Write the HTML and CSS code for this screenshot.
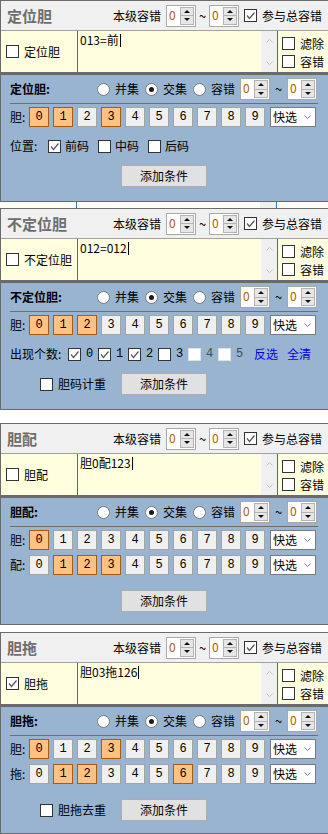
FILE: index.html
```html
<!DOCTYPE html>
<html lang="zh-CN">
<head>
    <meta charset="UTF-8">
    <meta name="viewport" content="width=device-width, initial-scale=1.0">
    <title>条件设置</title>
    <link rel="stylesheet" href="styles.css">
</head>
<body>
    <!-- 定位胆 -->
    <div class="panel">
        <div class="head">
            <span class="title">定位胆</span>
            <span>本级容错</span>
            <span class="spin from"><span class="val">0</span><span class="arr"><i class="up"></i><i class="dn"></i></span></span>
            <span class="tilde">~</span>
            <span class="spin"><span class="val">0</span><span class="arr"><i class="up"></i><i class="dn"></i></span></span>
            <span class="cb on join"><svg viewBox="0 0 11 11"><path d="M2 5.5 4.5 8.5 9.5 2.5"/></svg></span><span>参与总容错</span>
        </div>
        <div class="entry">
            <label class="pick"><span class="cb"></span>定位胆</label>
            <div class="memo">
                <div class="memo-text">013=前<i class="caret"></i></div>
                <div class="vscroll">
                    <svg viewBox="0 0 7 4"><path d="M0.5 3.5 3.5 0.5 6.5 3.5"/></svg>
                    <svg viewBox="0 0 7 4"><path d="M0.5 0.5 3.5 3.5 6.5 0.5"/></svg>
                </div>
            </div>
            <div class="flags">
                <label><span class="cb"></span>滤除</label>
                <label><span class="cb"></span>容错</label>
            </div>
        </div>
        <div class="cond">
            <div class="cond-head">
                <b class="cond-title">定位胆:</b>
                <span class="rd"></span><span class="rd-text">并集</span>
                <span class="rd on"></span><span class="rd-text">交集</span>
                <span class="rd"></span><span class="rd-text last">容错</span>
                <span class="spin"><span class="val">0</span><span class="arr"><i class="up"></i><i class="dn"></i></span></span>
                <span class="tilde wide">~</span>
                <span class="spin"><span class="val">0</span><span class="arr"><i class="up"></i><i class="dn"></i></span></span>
            </div>
            <div class="sep"></div>
            <div class="nums">
                <span class="lbl">胆:</span>
                <span class="num on">0</span><span class="num on">1</span><span class="num">2</span><span class="num on">3</span><span class="num">4</span>
                <span class="num">5</span><span class="num">6</span><span class="num">7</span><span class="num">8</span><span class="num">9</span>
                <span class="quick">快选<svg viewBox="0 0 7 4"><path d="M0.5 0.5 3.5 3.5 6.5 0.5"/></svg></span>
            </div>
            <div class="opts">
                <span class="opt-lbl">位置:</span>
                <label class="opt"><span class="cb on"><svg viewBox="0 0 11 11"><path d="M2 5.5 4.5 8.5 9.5 2.5"/></svg></span>前码</label>
                <label class="opt"><span class="cb"></span>中码</label>
                <label class="opt"><span class="cb"></span>后码</label>
            </div>
            <div class="actions">
                <span class="lead"></span>
                <span class="add">添加条件</span>
            </div>
        </div>
    </div>

    <div class="gap gap-a">
        <span class="g-left"></span><span class="g-line"></span><span class="g-mid"></span><span class="g-bar"></span><span class="g-line"></span>
    </div>

    <!-- 不定位胆 -->
    <div class="panel">
        <div class="head">
            <span class="title">不定位胆</span>
            <span>本级容错</span>
            <span class="spin from"><span class="val">0</span><span class="arr"><i class="up"></i><i class="dn"></i></span></span>
            <span class="tilde">~</span>
            <span class="spin"><span class="val">0</span><span class="arr"><i class="up"></i><i class="dn"></i></span></span>
            <span class="cb on join"><svg viewBox="0 0 11 11"><path d="M2 5.5 4.5 8.5 9.5 2.5"/></svg></span><span>参与总容错</span>
        </div>
        <div class="entry">
            <label class="pick"><span class="cb"></span>不定位胆</label>
            <div class="memo">
                <div class="memo-text">012=012<i class="caret"></i></div>
                <div class="vscroll">
                    <svg viewBox="0 0 7 4"><path d="M0.5 3.5 3.5 0.5 6.5 3.5"/></svg>
                    <svg viewBox="0 0 7 4"><path d="M0.5 0.5 3.5 3.5 6.5 0.5"/></svg>
                </div>
            </div>
            <div class="flags">
                <label><span class="cb"></span>滤除</label>
                <label><span class="cb"></span>容错</label>
            </div>
        </div>
        <div class="cond">
            <div class="cond-head">
                <b class="cond-title">不定位胆:</b>
                <span class="rd"></span><span class="rd-text">并集</span>
                <span class="rd on"></span><span class="rd-text">交集</span>
                <span class="rd"></span><span class="rd-text last">容错</span>
                <span class="spin"><span class="val">0</span><span class="arr"><i class="up"></i><i class="dn"></i></span></span>
                <span class="tilde wide">~</span>
                <span class="spin"><span class="val">0</span><span class="arr"><i class="up"></i><i class="dn"></i></span></span>
            </div>
            <div class="sep"></div>
            <div class="nums">
                <span class="lbl">胆:</span>
                <span class="num on">0</span><span class="num on">1</span><span class="num on">2</span><span class="num">3</span><span class="num">4</span>
                <span class="num">5</span><span class="num">6</span><span class="num">7</span><span class="num">8</span><span class="num">9</span>
                <span class="quick">快选<svg viewBox="0 0 7 4"><path d="M0.5 0.5 3.5 3.5 6.5 0.5"/></svg></span>
            </div>
            <div class="opts">
                <span class="opt-lbl count">出现个数:</span>
                <label class="cnt"><span class="cb on"><svg viewBox="0 0 11 11"><path d="M2 5.5 4.5 8.5 9.5 2.5"/></svg></span>0</label>
                <label class="cnt"><span class="cb on"><svg viewBox="0 0 11 11"><path d="M2 5.5 4.5 8.5 9.5 2.5"/></svg></span>1</label>
                <label class="cnt"><span class="cb on"><svg viewBox="0 0 11 11"><path d="M2 5.5 4.5 8.5 9.5 2.5"/></svg></span>2</label>
                <label class="cnt"><span class="cb"></span>3</label>
                <label class="cnt off"><span class="cb"></span>4</label>
                <label class="cnt off"><span class="cb"></span>5</label>
                <a class="link first">反选</a>
                <a class="link">全清</a>
            </div>
            <div class="actions">
                <span class="lead"><label><span class="cb"></span>胆码计重</label></span>
                <span class="add">添加条件</span>
            </div>
        </div>
    </div>

    <div class="gap gap-b"></div>

    <!-- 胆配 -->
    <div class="panel">
        <div class="head">
            <span class="title">胆配</span>
            <span>本级容错</span>
            <span class="spin from"><span class="val">0</span><span class="arr"><i class="up"></i><i class="dn"></i></span></span>
            <span class="tilde">~</span>
            <span class="spin"><span class="val">0</span><span class="arr"><i class="up"></i><i class="dn"></i></span></span>
            <span class="cb on join"><svg viewBox="0 0 11 11"><path d="M2 5.5 4.5 8.5 9.5 2.5"/></svg></span><span>参与总容错</span>
        </div>
        <div class="entry">
            <label class="pick"><span class="cb"></span>胆配</label>
            <div class="memo">
                <div class="memo-text">胆0配123<i class="caret"></i></div>
                <div class="vscroll">
                    <svg viewBox="0 0 7 4"><path d="M0.5 3.5 3.5 0.5 6.5 3.5"/></svg>
                    <svg viewBox="0 0 7 4"><path d="M0.5 0.5 3.5 3.5 6.5 0.5"/></svg>
                </div>
            </div>
            <div class="flags">
                <label><span class="cb"></span>滤除</label>
                <label><span class="cb"></span>容错</label>
            </div>
        </div>
        <div class="cond">
            <div class="cond-head">
                <b class="cond-title">胆配:</b>
                <span class="rd"></span><span class="rd-text">并集</span>
                <span class="rd on"></span><span class="rd-text">交集</span>
                <span class="rd"></span><span class="rd-text last">容错</span>
                <span class="spin"><span class="val">0</span><span class="arr"><i class="up"></i><i class="dn"></i></span></span>
                <span class="tilde wide">~</span>
                <span class="spin"><span class="val">0</span><span class="arr"><i class="up"></i><i class="dn"></i></span></span>
            </div>
            <div class="sep"></div>
            <div class="nums">
                <span class="lbl">胆:</span>
                <span class="num on">0</span><span class="num">1</span><span class="num">2</span><span class="num">3</span><span class="num">4</span>
                <span class="num">5</span><span class="num">6</span><span class="num">7</span><span class="num">8</span><span class="num">9</span>
                <span class="quick">快选<svg viewBox="0 0 7 4"><path d="M0.5 0.5 3.5 3.5 6.5 0.5"/></svg></span>
            </div>
            <div class="nums">
                <span class="lbl">配:</span>
                <span class="num">0</span><span class="num on">1</span><span class="num on">2</span><span class="num on">3</span><span class="num">4</span>
                <span class="num">5</span><span class="num">6</span><span class="num">7</span><span class="num">8</span><span class="num">9</span>
                <span class="quick">快选<svg viewBox="0 0 7 4"><path d="M0.5 0.5 3.5 3.5 6.5 0.5"/></svg></span>
            </div>
            <div class="actions">
                <span class="lead"></span>
                <span class="add">添加条件</span>
            </div>
        </div>
    </div>

    <div class="gap gap-c"></div>

    <!-- 胆拖 -->
    <div class="panel">
        <div class="head">
            <span class="title">胆拖</span>
            <span>本级容错</span>
            <span class="spin from"><span class="val">0</span><span class="arr"><i class="up"></i><i class="dn"></i></span></span>
            <span class="tilde">~</span>
            <span class="spin"><span class="val">0</span><span class="arr"><i class="up"></i><i class="dn"></i></span></span>
            <span class="cb on join"><svg viewBox="0 0 11 11"><path d="M2 5.5 4.5 8.5 9.5 2.5"/></svg></span><span>参与总容错</span>
        </div>
        <div class="entry">
            <label class="pick"><span class="cb on"><svg viewBox="0 0 11 11"><path d="M2 5.5 4.5 8.5 9.5 2.5"/></svg></span>胆拖</label>
            <div class="memo">
                <div class="memo-text">胆03拖126<i class="caret"></i></div>
                <div class="vscroll">
                    <svg viewBox="0 0 7 4"><path d="M0.5 3.5 3.5 0.5 6.5 3.5"/></svg>
                    <svg viewBox="0 0 7 4"><path d="M0.5 0.5 3.5 3.5 6.5 0.5"/></svg>
                </div>
            </div>
            <div class="flags">
                <label><span class="cb"></span>滤除</label>
                <label><span class="cb"></span>容错</label>
            </div>
        </div>
        <div class="cond">
            <div class="cond-head">
                <b class="cond-title">胆拖:</b>
                <span class="rd"></span><span class="rd-text">并集</span>
                <span class="rd on"></span><span class="rd-text">交集</span>
                <span class="rd"></span><span class="rd-text last">容错</span>
                <span class="spin"><span class="val">0</span><span class="arr"><i class="up"></i><i class="dn"></i></span></span>
                <span class="tilde wide">~</span>
                <span class="spin"><span class="val">0</span><span class="arr"><i class="up"></i><i class="dn"></i></span></span>
            </div>
            <div class="sep"></div>
            <div class="nums">
                <span class="lbl">胆:</span>
                <span class="num on">0</span><span class="num">1</span><span class="num">2</span><span class="num on">3</span><span class="num">4</span>
                <span class="num">5</span><span class="num">6</span><span class="num">7</span><span class="num">8</span><span class="num">9</span>
                <span class="quick">快选<svg viewBox="0 0 7 4"><path d="M0.5 0.5 3.5 3.5 6.5 0.5"/></svg></span>
            </div>
            <div class="nums">
                <span class="lbl">拖:</span>
                <span class="num">0</span><span class="num on">1</span><span class="num on">2</span><span class="num">3</span><span class="num">4</span>
                <span class="num">5</span><span class="num on">6</span><span class="num">7</span><span class="num">8</span><span class="num">9</span>
                <span class="quick">快选<svg viewBox="0 0 7 4"><path d="M0.5 0.5 3.5 3.5 6.5 0.5"/></svg></span>
            </div>
            <div class="actions">
                <span class="lead"><label><span class="cb"></span>胆拖去重</label></span>
                <span class="add">添加条件</span>
            </div>
        </div>
    </div>
</body>
</html>
```

FILE: styles.css
```css
body {
    margin: 0;
    width: 328px;
    overflow: hidden;
    background: #fff;
    color: #000;
    font-family: "Noto Sans CJK SC", "Noto Sans", sans-serif;
    font-size: 12px;
    line-height: 14px;
}

label {
    display: flex;
    align-items: center;
}

/* panel frame */
.panel {
    border-top: 1px solid #6a6a6a;
    border-left: 1px solid #6a6a6a;
    border-bottom: 1px solid #6a6a6a;
}

.gap-a {
    display: flex;
    height: 6px;
}

.gap-a .g-left {
    width: 76px;
    background: #fffff6;
}

.gap-a .g-line {
    width: 1px;
    background: #2f74c0;
}

.gap-a .g-mid {
    width: 183px;
}

.gap-a .g-bar {
    width: 16px;
    background: #f0f0f0;
}

.gap-b {
    height: 13px;
}

.gap-c {
    height: 7px;
}

/* header */
.head {
    display: flex;
    align-items: center;
    height: 29px;
    padding-left: 6px;
    background: #f0f0f0;
    border-bottom: 1px solid #a0a0a0;
}

.title {
    width: 106px;
    font-size: 15px;
    font-weight: bold;
    color: #6e6e6e;
}

.head .from {
    margin-left: 5px;
}

.tilde {
    width: 13px;
    text-align: center;
    font-size: 13px;
}

.tilde.wide {
    width: 17px;
}

.head .join {
    margin: 0 5px;
}

/* spin box */
.spin {
    display: flex;
    width: 30px;
    height: 22px;
    box-sizing: border-box;
    border: 1px solid #a8a8a8;
    background: #fff;
}

.spin .val {
    flex: 1;
    padding-left: 2px;
    line-height: 18px;
    color: #a86200;
}

.spin .arr {
    width: 14px;
    margin: 1px 1px 1px 0;
    display: flex;
    flex-direction: column;
    border: 1px solid #b4b4b4;
    box-sizing: border-box;
}

.arr i {
    flex: 1;
    display: flex;
    align-items: center;
    justify-content: center;
    background: #e6e6e6;
}

.arr i + i {
    border-top: 1px solid #b4b4b4;
}

.arr .up::after {
    content: "";
    border-left: 3px solid transparent;
    border-right: 3px solid transparent;
    border-bottom: 3px solid #111;
}

.arr .dn::after {
    content: "";
    border-left: 3px solid transparent;
    border-right: 3px solid transparent;
    border-top: 3px solid #111;
}

/* check box and radio */
.cb {
    display: inline-flex;
    flex: none;
    width: 13px;
    height: 13px;
    box-sizing: border-box;
    border: 1px solid #333;
    background: #fff;
}

.cb svg {
    width: 11px;
    height: 11px;
    fill: none;
    stroke: #555;
    stroke-width: 1.2;
}

.rd {
    display: inline-flex;
    flex: none;
    align-items: center;
    justify-content: center;
    width: 13px;
    height: 13px;
    box-sizing: border-box;
    border: 1px solid #7a7a7a;
    border-radius: 50%;
    background: #fff;
}

.rd.on::after {
    content: "";
    width: 5px;
    height: 5px;
    border-radius: 50%;
    background: #1a1a1a;
}

.rd-text {
    margin: 0 6px 0 5px;
}

.rd-text.last {
    margin-right: 5px;
}

/* yellow entry row */
.entry {
    display: flex;
    height: 41px;
    background: #ffffe0;
    border-bottom: 3px solid #6a6a6a;
}

.pick {
    width: 76px;
    padding-left: 5px;
    box-sizing: border-box;
}

.pick .cb {
    margin-right: 5px;
}

.memo {
    display: flex;
    width: 201px;
    box-sizing: border-box;
    border-left: 1px solid #2f74c0;
    border-right: 1px solid #2f74c0;
}

.memo-text {
    flex: 1;
    padding: 2px 0 0 2px;
}

.caret {
    display: inline-block;
    width: 1px;
    height: 13px;
    margin-left: 1px;
    vertical-align: -2px;
    background: #000;
}

.vscroll {
    display: flex;
    flex-direction: column;
    justify-content: space-between;
    align-items: center;
    width: 16px;
    padding: 8px 0 7px;
    box-sizing: border-box;
    background: #f0f0f0;
}

.vscroll svg {
    width: 7px;
    height: 4px;
    fill: none;
    stroke: #c2c2c2;
}

.flags {
    flex: 1;
    display: flex;
    flex-direction: column;
    gap: 5px;
    padding: 6px 0 0 4px;
}

.flags label {
    height: 13px;
}

.flags .cb {
    margin-right: 5px;
}

/* blue condition block */
.cond {
    height: 126px;
    box-sizing: border-box;
    padding-left: 9px;
    background: #99b4d1;
}

.cond-head {
    display: flex;
    align-items: center;
    height: 28px;
}

.cond-title {
    width: 87px;
}

.sep {
    height: 1px;
    margin: 0 10px 3px 0;
    background: #6e6e6e;
}

.nums {
    display: flex;
    align-items: center;
    height: 20px;
}

.nums + .nums {
    margin-top: 5px;
}

.nums .lbl {
    width: 19px;
}

.num {
    display: flex;
    align-items: center;
    justify-content: center;
    width: 20px;
    height: 20px;
    margin-right: 4px;
    box-sizing: border-box;
    border: 1px solid #a3a3a3;
    background: #f0f0f0;
    font-family: "Liberation Mono", monospace;
    font-size: 12px;
}

.num.on {
    background: #ffc184;
    border-color: #a85c12;
}

.quick {
    display: flex;
    align-items: center;
    justify-content: space-between;
    width: 46px;
    height: 20px;
    margin-left: 1px;
    padding: 0 4px 0 2px;
    box-sizing: border-box;
    border: 1px solid #7a7a7a;
    background: #fff;
}

.quick svg {
    width: 7px;
    height: 4px;
    fill: none;
    stroke: #777;
}

.opts {
    display: flex;
    align-items: center;
    height: 20px;
    margin-top: 9px;
}

.opt-lbl {
    width: 38px;
}

.opt-lbl.count {
    width: 58px;
}

.opt {
    margin-right: 9px;
}

.opt .cb {
    margin-right: 4px;
}

.cnt {
    width: 30px;
    font-family: "Liberation Mono", monospace;
}

.cnt .cb {
    margin-right: 5px;
}

.cnt.off {
    color: #3c4a5c;
}

.cnt.off .cb {
    border-color: #e2e2e2;
}

.link {
    color: #0000ee;
    margin-left: 9px;
}

.link.first {
    margin-left: 6px;
}

.actions {
    display: flex;
    align-items: center;
    height: 22px;
    margin-top: 9px;
}

.nums + .actions {
    margin-top: 15px;
}

.lead {
    width: 111px;
    padding-left: 30px;
    box-sizing: border-box;
}

.lead .cb {
    margin-right: 5px;
}

.add {
    display: flex;
    align-items: center;
    justify-content: center;
    width: 86px;
    height: 22px;
    box-sizing: border-box;
    border: 1px solid #adadad;
    background: #e1e1e1;
}
```
